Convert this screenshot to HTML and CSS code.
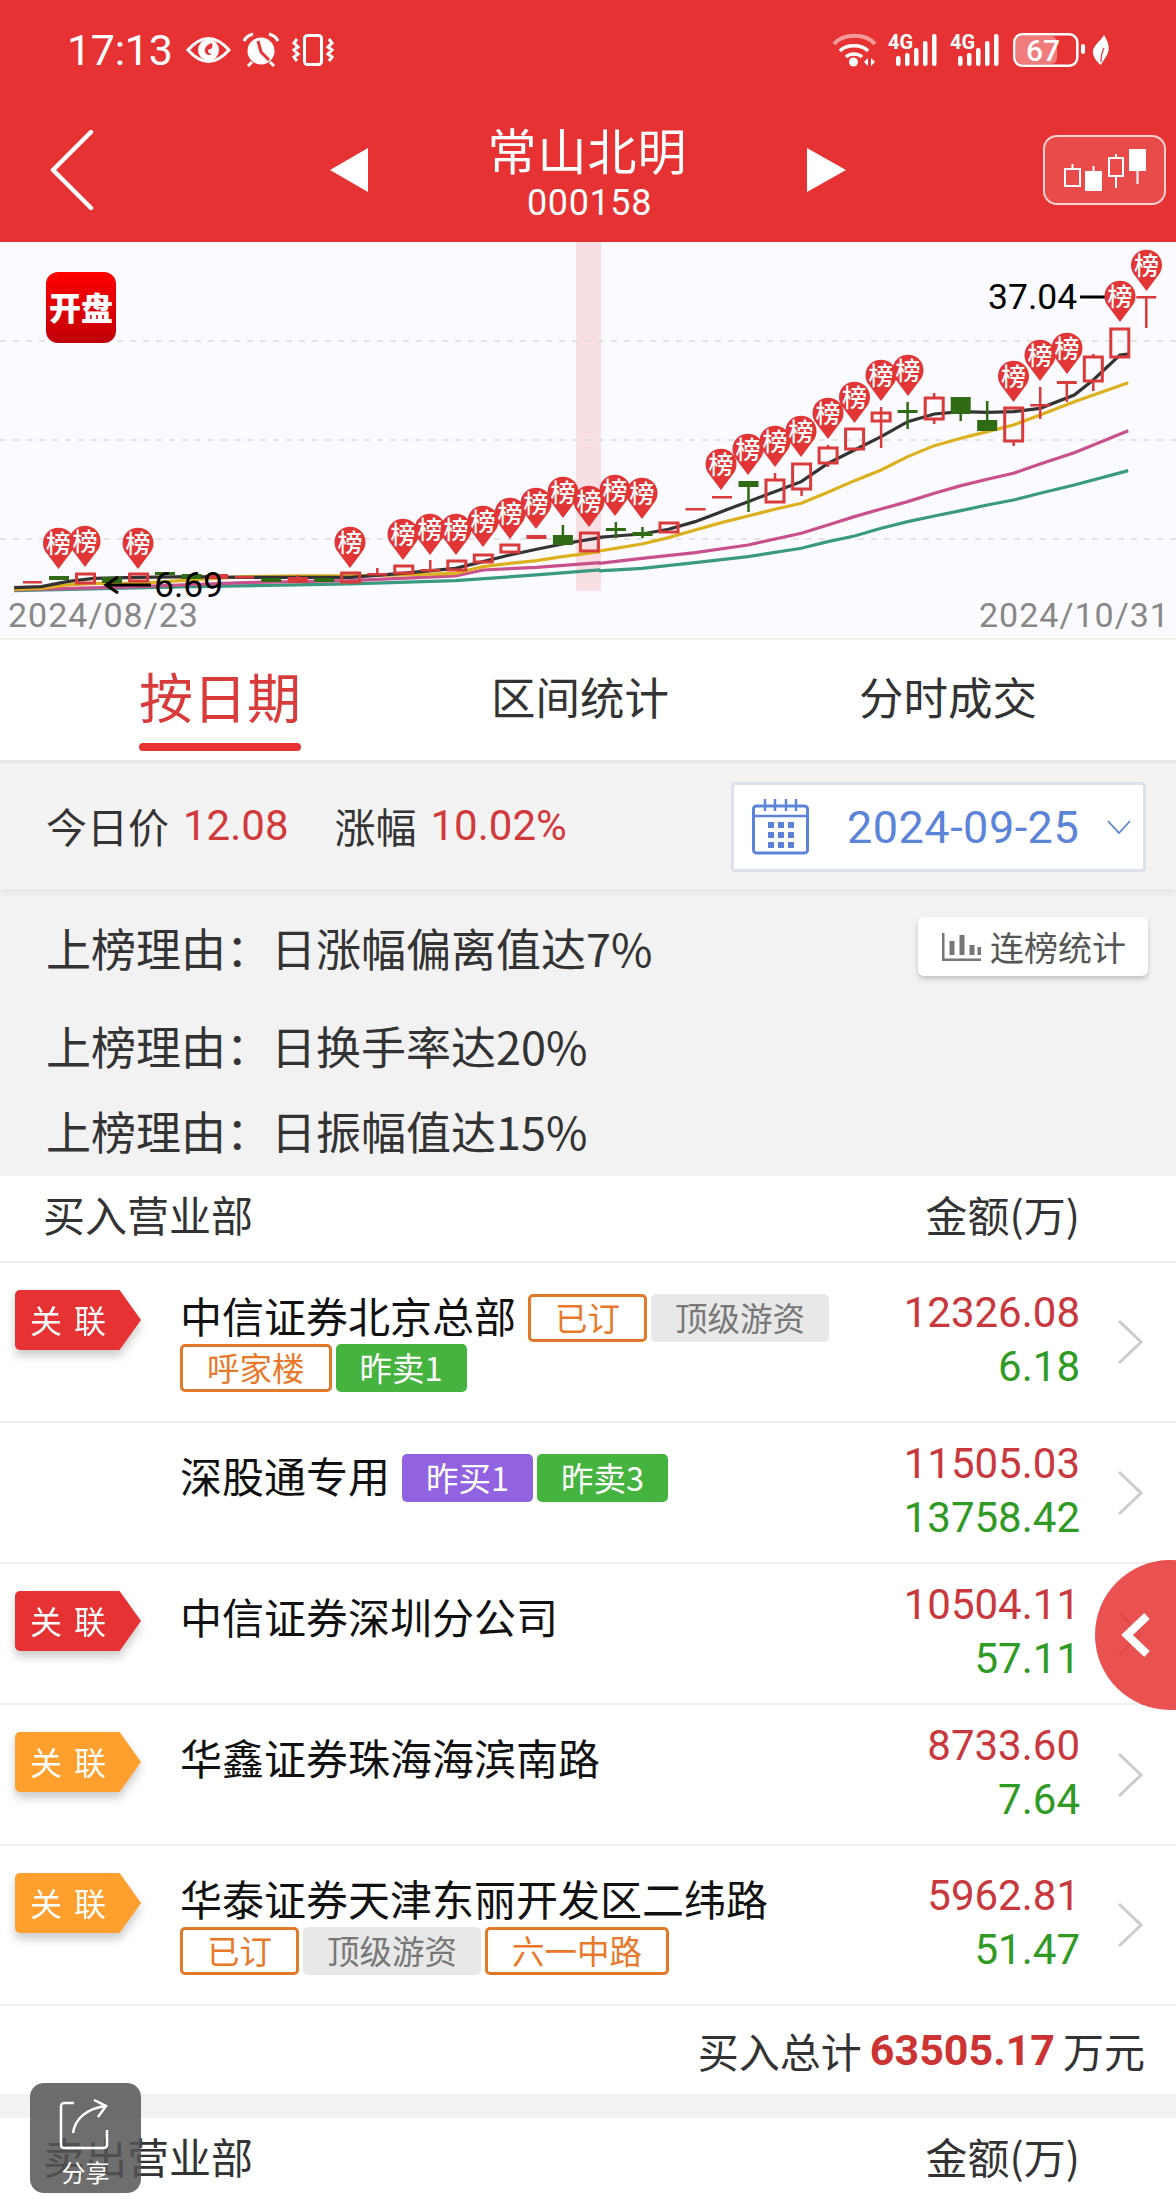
FILE: index.html
```html
<!DOCTYPE html>
<html lang="zh-CN">
<head>
<meta charset="utf-8">
<title>常山北明</title>
<link rel="stylesheet" href="styles.css">
</head>
<body>
<div class="page">
  <header class="head">
    <div class="status">
      <span class="time">17:13</span>
      <svg class="st st-eye" width="45" height="26" viewBox="0 0 45 26"><path d="M2 13C10 4 16 1.500 22.500 1.500S35 4 43 13C35 22 29 24.500 22.500 24.500S10 22 2 13Z" fill="none" stroke="#fff" stroke-width="3"/><circle cx="22.500" cy="13" r="10.500" fill="#fff"/><path d="M26 6c-4 1-8 4-7 9 1 3 4 4 7 2-2 0-4-1-4-3 0-1 1-2 2-2 2 0 3-2 2-6z" fill="#e63232"/></svg>
      <svg class="st st-alarm" width="36" height="34" viewBox="0 0 36 34"><circle cx="18" cy="18" r="13.500" fill="#fff"/><path d="M15 8l3 11 8 8" stroke="#e63232" stroke-width="3" fill="none"/><path d="M1 8C3 4 6 2 10 1M35 8c-2-4-5-6-9-7M9 29l-4 4M27 29l4 4" fill="none" stroke="#fff" stroke-width="3"/></svg>
      <svg class="st st-vib" width="42" height="32" viewBox="0 0 42 32"><rect x="12.500" y="1.500" width="17" height="29" rx="3" fill="none" stroke="#fff" stroke-width="3"/><path d="M5 5 2 9l4 4-4 3 4 4-4 3 3 4M37 5l3 4-4 4 4 3-4 4 4 3-3 4" fill="none" stroke="#fff" stroke-width="3"/></svg>
      <svg class="st st-wifi" width="44" height="34" viewBox="0 0 44 34"><path d="M1 11C10 0 33 0 42 11" fill="none" stroke="#f59a9a" stroke-width="4"/><path d="M7 18C13 11 29 11 35 18M13 24c4-4 12-4 16 0" fill="none" stroke="#fff" stroke-width="3.500"/><circle cx="20.500" cy="29" r="4.500" fill="#fff"/><path d="M35 25v8l-4-4zM38 25v8l4-4z" fill="#fff"/></svg>
      <svg class="st st-sig" width="52" height="33" viewBox="0 0 52 33"><text class="st-4g" x="0" y="15">4G</text><rect x="8" y="22" width="4.500" height="10" rx="2" fill="#fff"/><rect x="17" y="19" width="4.500" height="13" rx="2" fill="#fff"/><rect x="26" y="14" width="4.500" height="18" rx="2" fill="#fff"/><rect x="35" y="7" width="4.500" height="25" rx="2" fill="#fff"/><rect x="44" y="0" width="4.500" height="32" rx="2" fill="#fff"/></svg>
      <svg class="st st-sig2" width="52" height="33" viewBox="0 0 52 33"><text class="st-4g" x="0" y="15">4G</text><rect x="8" y="22" width="4.500" height="10" rx="2" fill="#fff"/><rect x="17" y="19" width="4.500" height="13" rx="2" fill="#fff"/><rect x="26" y="14" width="4.500" height="18" rx="2" fill="#fff"/><rect x="35" y="7" width="4.500" height="25" rx="2" fill="#fff"/><rect x="44" y="0" width="4.500" height="32" rx="2" fill="#fff"/></svg>
      <svg class="st st-bat" width="74" height="34" viewBox="0 0 74 34"><rect x="3" y="3" width="41" height="28" rx="6" fill="#f07c7c"/><rect x="1.300" y="1.300" width="63" height="31.400" rx="8" fill="none" stroke="#fff" stroke-width="2.500"/><text class="st-batt" x="30" y="27.500">67</text><rect x="68" y="11" width="4" height="10" rx="2" fill="#fff"/></svg>
      <svg class="st st-leaf" width="18" height="30" viewBox="0 0 18 30"><path d="M12 0c5 8 6 14 3 20-2 4-5 7-6 10-3-2-8-7-8-13C1 10 8 7 12 0z" fill="#fff"/><path d="M9 27c0-6 1-10 3-14" stroke="#e63232" stroke-width="1.200" fill="none"/></svg>
    </div>
    <nav class="nav">
      <svg class="back" width="44" height="80" viewBox="0 0 44 80"><path d="M41 2 3 40l38 38" fill="none" stroke="#fff" stroke-width="4.500" stroke-linecap="round" stroke-linejoin="round"/></svg>
      <svg class="tri-l" width="38" height="44" viewBox="0 0 38 44"><path d="M38 0v44L0 22z" fill="#fff"/></svg>
      <div class="title-col">
        <div class="title">常山北明</div>
        <div class="code">000158</div>
      </div>
      <svg class="tri-r" width="39" height="44" viewBox="0 0 39 44"><path d="M0 0v44l39-22z" fill="#fff"/></svg>
      <div class="kline-btn">
        <svg width="86" height="46" viewBox="0 0 86 46"><g fill="none" stroke="#fff" stroke-width="2"><path d="M10.500 17v5M31.500 19v5M54 7v4M54 29v12M75.500 24v13"/><rect x="3" y="22" width="15" height="17"/><rect x="47" y="11" width="14" height="18"/></g><rect x="23" y="24" width="17" height="20" fill="#fff"/><rect x="67" y="2" width="17" height="22" fill="#fff"/></svg>
      </div>
    </nav>
  </header>

  <section class="chart">
    <svg class="chart-svg" width="1176" height="396" viewBox="0 0 1176 396">
      <defs>
        <linearGradient id="logoG" x1="0" y1="0" x2="0" y2="1"><stop offset="0" stop-color="#ff0000"/><stop offset="1" stop-color="#c00008"/></linearGradient>
      </defs>
      <rect class="band" x="576" y="0" width="25" height="349"/>
      <path class="grid" d="M0 99H1176M0 198H1176M0 297H1176"/>

      <g transform="translate(0 -2) scale(.3827 .3333)">
        <polyline class="ln ln-g" points="37,1052 500,1040 915,1032 1190,1022 1402,1005 1568,990"/>
        <polyline class="ln ln-p" points="37,1050 360,1040 640,1028 915,1022 1190,1008 1262,990 1402,982 1568,968"/>
        <polyline class="ln ln-y" points="37,1048 108,1045 175,1035 245,1030 361,1030 500,1020 640,1010 780,1008 915,1008 1050,1005 1190,1000 1262,980 1332,970 1402,962 1470,950 1568,935"/>
        <polyline class="ln ln-k" points="37,1043 108,1040 175,1025 245,1015 360,1012 500,1010 640,1012 780,1012 915,1012 1050,1000 1190,985 1262,965 1332,945 1402,928 1470,912 1568,893"/>
      </g>
      <g transform="translate(580 -2) scale(.3802 .3333)">
        <polyline class="ln ln-g" points="50,993 163,985 303,968 442,950 582,925 652,905 722,888 792,865 862,845 932,828 1002,812 1071,795 1140,780 1210,760 1300,735 1442,692"/>
        <polyline class="ln ln-p" points="50,970 163,955 303,938 442,915 582,880 652,855 722,830 792,807 862,785 932,760 1002,737 1071,718 1140,700 1210,672 1300,638 1442,572"/>
        <polyline class="ln ln-y" points="50,933 93,925 163,912 233,893 303,870 372,848 442,828 512,808 582,790 652,757 722,722 792,690 862,650 932,617 1002,595 1071,575 1140,555 1210,525 1300,485 1442,428"/>
        <polyline class="ln ln-k" points="50,892 93,888 163,882 233,868 303,845 372,815 442,785 512,755 582,725 652,670 722,630 792,590 862,545 932,522 1002,515 1071,517 1140,515 1210,505 1300,465 1350,420 1420,345 1442,342"/>
      </g>

      <path class="wick-r" d="M297.700 333v3M350.700 340v2M377.300 326v7M430.300 318v12M775 231v7M801.600 247v7M828.100 203v3M828.100 221v4M881.100 165v41M934.200 151v5M934.200 177v5M1013.700 199v5M1040.200 145v32M1066.800 139v21M1093.300 112v3M1093.300 139v10M1146.300 54v32"/>
      <path class="wick-g" d="M562.900 283v10M615.900 280v16M642.500 285v11M748.500 239v31M907.600 160v27M960.700 172v7M987.200 159v19"/>
      <g class="c-g">
        <rect x="49" y="334" width="20" height="4"/><rect x="102" y="335" width="20" height="6"/><rect x="155" y="330" width="20" height="3"/><rect x="181.600" y="332" width="20" height="5"/><rect x="261.200" y="336" width="20" height="4"/><rect x="314.200" y="336" width="20" height="4"/><rect x="552.900" y="293" width="20" height="10"/><rect x="605.900" y="286" width="20" height="3"/><rect x="632.500" y="290" width="20" height="4"/><rect x="738.500" y="239" width="20" height="6"/><rect x="897.600" y="168" width="20" height="3"/><rect x="950.700" y="155" width="20" height="17"/><rect x="977.200" y="178" width="20" height="11"/>
      </g>
      <g class="c-r">
        <rect x="23" y="339" width="19" height="2.500"/><rect x="208" y="332" width="20" height="5"/><rect x="235" y="334" width="19" height="2.500"/><rect x="287.700" y="335" width="20" height="6"/><rect x="367.300" y="331" width="20" height="2.500"/><rect x="420.300" y="327" width="20" height="2.500"/><rect x="526.400" y="293" width="20" height="4"/><rect x="685.500" y="266" width="20" height="2.500"/><rect x="712" y="254" width="20" height="2.500"/><rect x="1030.200" y="162" width="20" height="2.500"/><rect x="1056.800" y="139" width="20" height="3"/><rect x="1136.300" y="54" width="20" height="2.500"/>
      </g>
      <g class="c-h">
        <rect x="76.500" y="332" width="18" height="9"/><rect x="129.600" y="332" width="18" height="7"/><rect x="341.700" y="331" width="18" height="9"/><rect x="394.800" y="324" width="18" height="7"/><rect x="447.800" y="319" width="18" height="9"/><rect x="474.300" y="313" width="18" height="7"/><rect x="500.900" y="303" width="18" height="7"/><rect x="580.400" y="291" width="18" height="18"/><rect x="660" y="281" width="18" height="9"/><rect x="766" y="238" width="18" height="22"/><rect x="792.600" y="222" width="18" height="25"/><rect x="819.100" y="206" width="18" height="15"/><rect x="845.600" y="187" width="18" height="20"/><rect x="872.100" y="171" width="18" height="8"/><rect x="925.200" y="156" width="18" height="21"/><rect x="1004.700" y="166" width="18" height="33"/><rect x="1084.300" y="115" width="18" height="24"/><rect x="1110.800" y="87" width="18" height="28"/>
      </g>

      <path class="leader" d="M151 343H108M118 335l-12 8 12 8"/>
      <text class="val" x="154" y="355">6.69</text>
      <text class="val" x="988" y="67">37.04</text>
      <path class="leader" d="M1080 55H1105"/>
      <text class="axis" x="8" y="385">2024/08/23</text>
      <text class="axis" x="979" y="385">2024/10/31</text>

      <g class="pins">
        <g transform="translate(58.500 327)"><path d="M0 0-12-16A15.500 15.500 0 1 1 12-16Z"/><text y="-16">榜</text></g>
        <g transform="translate(85 325)"><path d="M0 0-12-16A15.500 15.500 0 1 1 12-16Z"/><text y="-16">榜</text></g>
        <g transform="translate(138 327)"><path d="M0 0-12-16A15.500 15.500 0 1 1 12-16Z"/><text y="-16">榜</text></g>
        <g transform="translate(350 326)"><path d="M0 0-12-16A15.500 15.500 0 1 1 12-16Z"/><text y="-16">榜</text></g>
        <g transform="translate(403 318)"><path d="M0 0-12-16A15.500 15.500 0 1 1 12-16Z"/><text y="-16">榜</text></g>
        <g transform="translate(430 313)"><path d="M0 0-12-16A15.500 15.500 0 1 1 12-16Z"/><text y="-16">榜</text></g>
        <g transform="translate(456 313)"><path d="M0 0-12-16A15.500 15.500 0 1 1 12-16Z"/><text y="-16">榜</text></g>
        <g transform="translate(483 305)"><path d="M0 0-12-16A15.500 15.500 0 1 1 12-16Z"/><text y="-16">榜</text></g>
        <g transform="translate(510 297)"><path d="M0 0-12-16A15.500 15.500 0 1 1 12-16Z"/><text y="-16">榜</text></g>
        <g transform="translate(536 287)"><path d="M0 0-12-16A15.500 15.500 0 1 1 12-16Z"/><text y="-16">榜</text></g>
        <g transform="translate(563 276)"><path d="M0 0-12-16A15.500 15.500 0 1 1 12-16Z"/><text y="-16">榜</text></g>
        <g transform="translate(589 285)"><path d="M0 0-12-16A15.500 15.500 0 1 1 12-16Z"/><text y="-16">榜</text></g>
        <g transform="translate(615 274)"><path d="M0 0-12-16A15.500 15.500 0 1 1 12-16Z"/><text y="-16">榜</text></g>
        <g transform="translate(642 277)"><path d="M0 0-12-16A15.500 15.500 0 1 1 12-16Z"/><text y="-16">榜</text></g>
        <g transform="translate(721 248)"><path d="M0 0-12-16A15.500 15.500 0 1 1 12-16Z"/><text y="-16">榜</text></g>
        <g transform="translate(748 233)"><path d="M0 0-12-16A15.500 15.500 0 1 1 12-16Z"/><text y="-16">榜</text></g>
        <g transform="translate(775 225)"><path d="M0 0-12-16A15.500 15.500 0 1 1 12-16Z"/><text y="-16">榜</text></g>
        <g transform="translate(801 215)"><path d="M0 0-12-16A15.500 15.500 0 1 1 12-16Z"/><text y="-16">榜</text></g>
        <g transform="translate(828 197)"><path d="M0 0-12-16A15.500 15.500 0 1 1 12-16Z"/><text y="-16">榜</text></g>
        <g transform="translate(854.500 181)"><path d="M0 0-12-16A15.500 15.500 0 1 1 12-16Z"/><text y="-16">榜</text></g>
        <g transform="translate(881 159)"><path d="M0 0-12-16A15.500 15.500 0 1 1 12-16Z"/><text y="-16">榜</text></g>
        <g transform="translate(908 154)"><path d="M0 0-12-16A15.500 15.500 0 1 1 12-16Z"/><text y="-16">榜</text></g>
        <g transform="translate(1013.500 160)"><path d="M0 0-12-16A15.500 15.500 0 1 1 12-16Z"/><text y="-16">榜</text></g>
        <g transform="translate(1040 139)"><path d="M0 0-12-16A15.500 15.500 0 1 1 12-16Z"/><text y="-16">榜</text></g>
        <g transform="translate(1067 132)"><path d="M0 0-12-16A15.500 15.500 0 1 1 12-16Z"/><text y="-16">榜</text></g>
        <g transform="translate(1120 80)"><path d="M0 0-12-16A15.500 15.500 0 1 1 12-16Z"/><text y="-16">榜</text></g>
        <g transform="translate(1146.500 49)"><path d="M0 0-12-16A15.500 15.500 0 1 1 12-16Z"/><text y="-16">榜</text></g>
      </g>

      <rect x="46" y="30" width="70" height="71" rx="12" fill="url(#logoG)"/>
      <text class="logo-text" x="81" y="78">开盘</text>
    </svg>
  </section>

  <div class="tabs">
    <div class="tab tab-on">按日期</div>
    <div class="tab">区间统计</div>
    <div class="tab">分时成交</div>
  </div>

  <div class="price-bar">
    <span class="pb-label">今日价</span><span class="pb-val">12.08</span>
    <span class="pb-label pb-second">涨幅</span><span class="pb-val">10.02%</span>
    <div class="date-box">
      <svg width="57" height="56" viewBox="0 0 57 56"><rect x="1.500" y="7" width="54" height="47" rx="3" fill="none" stroke="#5b84d8" stroke-width="3"/><path d="M2 17H55" stroke="#5b84d8" stroke-width="2.500"/><path d="M13 0v12M23 0v12M34 0v12M44 0v12" stroke="#5b84d8" stroke-width="2.500"/><g fill="#5b84d8"><rect x="16" y="23" width="6" height="6"/><rect x="26" y="23" width="6" height="6"/><rect x="36" y="23" width="6" height="6"/><rect x="16" y="33" width="6" height="6"/><rect x="26" y="33" width="6" height="6"/><rect x="36" y="33" width="6" height="6"/><rect x="16" y="43" width="6" height="6"/><rect x="26" y="43" width="6" height="6"/><rect x="36" y="43" width="6" height="6"/></g></svg>
      <span class="date-text">2024-09-25</span>
      <svg class="date-arrow" width="24" height="14" viewBox="0 0 24 14"><path d="M1 1l11 12L23 1" fill="none" stroke="#5b84d8" stroke-width="1.800"/></svg>
    </div>
  </div>

  <div class="reasons">
    <div class="reason reason-first">
      <span>上榜理由&#65306;日涨幅偏离值达7%</span>
      <div class="stat-btn">
        <svg width="39" height="28" viewBox="0 0 39 28"><path d="M1 0v27H39" fill="none" stroke="#777" stroke-width="3"/><path d="M10 8v14M20 2v20M30 12v10M38 14v8" stroke="#777" stroke-width="5"/></svg>
        <span>连榜统计</span>
      </div>
    </div>
    <div class="reason">上榜理由&#65306;日换手率达20%</div>
    <div class="reason">上榜理由&#65306;日振幅值达15%</div>
  </div>

  <div class="list-head"><span>买入营业部</span><span>金额(万)</span></div>

  <div class="row">
    <div class="badge"><span class="badge-shape badge-red">关联</span></div>
    <div class="info">
      <span class="name">中信证券北京总部</span>
      <span class="tag tag-line">已订</span><span class="tag tag-grey">顶级游资</span><span class="tag tag-line">呼家楼</span><span class="tag tag-green">昨卖1</span>
    </div>
    <div class="nums"><div class="up">12326.08</div><div class="down">6.18</div></div>
    <svg class="chev" width="26" height="44" viewBox="0 0 26 44"><path d="M2 1l22 21L2 43" fill="none" stroke="#ccc" stroke-width="3"/></svg>
  </div>
  <div class="row">
    <div class="badge"></div>
    <div class="info">
      <span class="name">深股通专用</span>
      <span class="tag tag-purple">昨买1</span><span class="tag tag-green">昨卖3</span>
    </div>
    <div class="nums"><div class="up">11505.03</div><div class="down">13758.42</div></div>
    <svg class="chev" width="26" height="44" viewBox="0 0 26 44"><path d="M2 1l22 21L2 43" fill="none" stroke="#ccc" stroke-width="3"/></svg>
  </div>
  <div class="row">
    <div class="badge"><span class="badge-shape badge-red">关联</span></div>
    <div class="info"><span class="name">中信证券深圳分公司</span></div>
    <div class="nums"><div class="up">10504.11</div><div class="down">57.11</div></div>
    <svg class="chev" width="26" height="44" viewBox="0 0 26 44"><path d="M2 1l22 21L2 43" fill="none" stroke="#ccc" stroke-width="3"/></svg>
  </div>
  <div class="row">
    <div class="badge"><span class="badge-shape badge-orange">关联</span></div>
    <div class="info"><span class="name">华鑫证券珠海海滨南路</span></div>
    <div class="nums"><div class="up">8733.60</div><div class="down">7.64</div></div>
    <svg class="chev" width="26" height="44" viewBox="0 0 26 44"><path d="M2 1l22 21L2 43" fill="none" stroke="#ccc" stroke-width="3"/></svg>
  </div>
  <div class="row">
    <div class="badge"><span class="badge-shape badge-orange">关联</span></div>
    <div class="info">
      <span class="name">华泰证券天津东丽开发区二纬路</span>
      <span class="tag tag-line">已订</span><span class="tag tag-grey">顶级游资</span><span class="tag tag-line">六一中路</span>
    </div>
    <div class="nums"><div class="up">5962.81</div><div class="down">51.47</div></div>
    <svg class="chev" width="26" height="44" viewBox="0 0 26 44"><path d="M2 1l22 21L2 43" fill="none" stroke="#ccc" stroke-width="3"/></svg>
  </div>

  <div class="total"><span>买入总计</span><b class="total-num">63505.17</b><span>万元</span></div>
  <div class="gap"></div>
  <div class="list-head list-head-plain"><span>卖出营业部</span><span>金额(万)</span></div>

  <div class="float-btn">
    <svg width="32" height="46" viewBox="0 0 32 46"><path d="M27 4 7 23l20 19" fill="none" stroke="#fff" stroke-width="8"/></svg>
  </div>
  <div class="share">
    <svg class="share-icon" width="52" height="52" viewBox="0 0 52 52"><path d="M16 4H6a3 3 0 0 0-3 3v39a3 3 0 0 0 3 3h40a3 3 0 0 0 3-3V31" fill="none" stroke="#fff" stroke-width="2.500"/><path d="M15 34C17 20 28 10 47 7M36 1l12 6-8 11" fill="none" stroke="#fff" stroke-width="2.500"/></svg>
    <span class="share-text">分享</span>
  </div>
</div>
</body>
</html>
```

FILE: styles.css
```css
* { box-sizing: border-box; }
html, body { margin: 0; padding: 0; background: #fff; }
body { font-family: "Noto Sans CJK SC", "Noto Sans", sans-serif; color: #333; }
.page { position: relative; width: 1176px; height: 2199px; overflow: hidden; display: flex; flex-direction: column; }

/* header */
.head { background: #e63232; color: #fff; height: 242px; flex: none; }
.status { height: 98px; padding: 2px 66px 0 67px; display: flex; align-items: center; }
.time { font: 400 43px/1 Roboto, sans-serif; letter-spacing: -.3px; width: 104px; white-space: nowrap; }
.st { flex: none; overflow: visible; }
.st-eye { margin-left: 15px; }
.st-alarm { margin-left: 12px; }
.st-vib { margin-left: 13px; }
.st-wifi { margin-left: auto; }
.st-sig { margin-left: 11px; }
.st-sig2 { margin-left: 10px; }
.st-bat { margin-left: 11px; }
.st-leaf { margin-left: 5px; }
.st-4g { font: 700 20px Roboto, sans-serif; fill: #fff; }
.st-batt { font: 500 30px Roboto, sans-serif; fill: #fff; text-anchor: middle; }

.nav { height: 144px; padding-left: 50px; display: flex; align-items: center; }
.back { flex: none; }
.tri-l { flex: none; margin-left: 236px; }
.title-col { width: 439px; align-self: flex-start; margin-top: 19px; text-align: center; }
.title { font-size: 49px; line-height: 63px; letter-spacing: 1px; }
.code { font: 400 36px/46px Roboto, sans-serif; letter-spacing: .6px; padding-left: 4px; }
.tri-r { flex: none; }
.kline-btn { flex: none; margin-left: 197px; width: 123px; height: 70px; border: 2px solid rgba(255,255,255,.75); border-radius: 14px; background: rgba(255,255,255,.12); display: flex; align-items: center; justify-content: center; }

/* chart */
.chart { height: 398px; flex: none; background: #fbfbff; border-bottom: 2px solid #eef0ee; }
.chart-svg { display: block; }
.band { fill: #f7dfe3; }
.grid { stroke: #dcdcdc; stroke-width: 1.500; stroke-dasharray: 6 7; fill: none; }
.ln { fill: none; stroke-width: 3.200; vector-effect: non-scaling-stroke; }
.ln-k { stroke: #333; }
.ln-y { stroke: #dcb01e; }
.ln-p { stroke: #c8508c; }
.ln-g { stroke: #3a9a80; }
.wick-r { stroke: #d93a3a; stroke-width: 2.500; fill: none; }
.wick-g { stroke: #2f6b14; stroke-width: 2.500; fill: none; }
.c-g { fill: #2f6b14; }
.c-r { fill: #d93a3a; }
.c-h { fill: none; stroke: #d93a3a; stroke-width: 3; }
.leader { stroke: #000; stroke-width: 3; fill: none; }
.val { font: 400 35.500px Roboto, sans-serif; fill: #000; }
.axis { font: 400 34px Roboto, sans-serif; fill: #888; letter-spacing: 1px; }
.pins path { fill: #e23535; }
.pins text { font: 500 25px "Noto Sans CJK SC", sans-serif; fill: #fff; text-anchor: middle; }
.logo-text { font: 900 32px "Noto Sans CJK SC", sans-serif; fill: #fff; text-anchor: middle; }

/* tabs */
.tabs { height: 123px; flex: none; padding: 22px 0 0 139px; display: flex; gap: 190px; border-bottom: 3px solid #e9e9e9; background: #fff; }
.tab { font-size: 44.500px; line-height: 68px; color: #333; }
.tab-on { font-size: 54px; color: #d93b3b; }
.tab-on::after { content: ""; display: block; height: 8px; margin: 13px 0 0; border-radius: 4px; background: #e63232; }

/* price bar */
.price-bar { height: 126px; flex: none; padding: 0 30px 2px 46px; display: flex; align-items: center; background: #f3f3f4; box-shadow: 0 5px 5px -1px #e6e6e6; position: relative; }
.pb-label { font-size: 41px; color: #333; }
.pb-val { font: 400 42px Roboto, sans-serif; color: #d23a3a; margin-left: 14px; }
.pb-second { margin-left: 46px; }
.date-box { margin-left: auto; margin-top: 4px; width: 415px; height: 90px; padding: 0 0 0 18px; background: #fff; border: 3px solid #dde1e8; border-radius: 4px; display: flex; align-items: center; }
.date-text { font: 400 45px Roboto, sans-serif; color: #5b84d8; margin-left: 38px; letter-spacing: .5px; }
.date-arrow { margin-left: 28px; }

/* reasons */
.reasons { height: 287px; flex: none; padding: 29px 28px 0 46px; background: #f2f2f3; }
.reason { font-size: 45px; line-height: 60px; height: 60px; margin-bottom: 25px; color: #333; white-space: nowrap; }
.reason-first { display: flex; justify-content: space-between; margin-bottom: 38px; }
.stat-btn { width: 230px; height: 59px; margin-top: -1px; padding-left: 24px; display: flex; align-items: center; gap: 9px; background: #fff; border-radius: 6px; box-shadow: 0 3px 5px rgba(0,0,0,.2); font-size: 34px; color: #555; }

/* list */
.list-head { height: 87px; flex: none; padding: 0 96px 11px 43px; display: flex; align-items: center; justify-content: space-between; font-size: 42px; color: #333; border-bottom: 2px solid #eee; }
.list-head-plain { border-bottom: 0; padding-bottom: 8px; height: 82px; }
.row { min-height: 141px; flex: none; padding: 0 33px 0 15px; display: flex; border-bottom: 2px solid #eee; }
.badge { width: 126px; height: 60px; margin: 27px 39px 0 0; flex: none; filter: drop-shadow(0 6px 5px rgba(0,0,0,.2)); }
.badge-shape { display: block; height: 60px; padding-left: 15px; color: #fff; font-size: 32px; line-height: 58px; letter-spacing: 12px; border-radius: 5px 0 0 5px; clip-path: polygon(0 0, 83% 0, 100% 50%, 83% 100%, 0 100%); }
.badge-red { background: #e63232; }
.badge-orange { background: #ffa02e; }
.info { flex: 1; padding: 31px 0 29px; display: flex; flex-wrap: wrap; align-items: flex-start; align-content: flex-start; gap: 2px 4px; }
.name { font-size: 42px; line-height: 42px; margin: 0 8px 6px 0; color: #111; white-space: nowrap; }
.tag { height: 48px; padding: 0 24px; border-radius: 5px; font-size: 32.500px; line-height: 46px; white-space: nowrap; }
.tag-line { border: 3px solid #e07a2a; padding: 0 24px; line-height: 40px; color: #e8792a; background: #fff; }
.tag-grey { background: #e8e8e8; color: #777; }
.tag-green { background: #45b43f; color: #fff; }
.tag-purple { background: #9163e0; color: #fff; }
.nums { width: 200px; flex: none; align-self: center; margin-top: -4px; text-align: right; font: 400 42px/54px Roboto, sans-serif; }
.up { color: #c8383c; }
.down { color: #2f9a24; }
.chev { flex: none; margin-left: 37px; align-self: center; }

.total { height: 88px; flex: none; padding: 0 31px 0 0; display: flex; justify-content: flex-end; align-items: center; gap: 8px; font-size: 41px; color: #333; }
.total-num { font: 700 43px Roboto, sans-serif; color: #cc3333; }
.gap { height: 24px; flex: none; background: #f2f2f2; }

/* overlays */
.float-btn { position: absolute; left: 1095px; top: 1560px; width: 150px; height: 150px; border-radius: 50%; background: rgba(230,50,50,.85); display: flex; align-items: center; padding-left: 25px; }
.share { position: absolute; left: 30px; top: 2083px; width: 111px; height: 110px; border-radius: 14px; background: rgba(85,85,85,.85); display: flex; flex-direction: column; align-items: center; padding-top: 16px; color: #fff; font-size: 24px; line-height: 30px; }
.share-icon { margin-right: 4px; }
.share-text { margin-top: 6px; }
```
